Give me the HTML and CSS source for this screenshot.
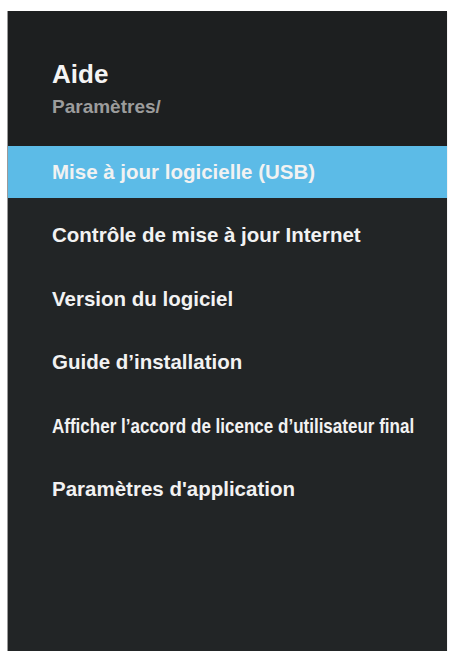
FILE: index.html
```html
<!DOCTYPE html>
<html>
<head>
    <link rel="stylesheet" href="styles.css">
</head>
<body>
    <div class="menu-panel">
        <!-- Header -->
        <div class="menu-header">
            <h1 class="menu-title">Aide</h1>
            <div class="menu-path">Paramètres/</div>
        </div>

        <!-- Items -->
        <ul class="menu-list">
            <li class="menu-item active">Mise à jour logicielle (USB)</li>
            <li class="menu-item">Contrôle de mise à jour Internet</li>
            <li class="menu-item">Version du logiciel</li>
            <li class="menu-item">Guide d’installation</li>
            <li class="menu-item"><span class="narrow">Afficher l’accord de licence d’utilisateur final</span></li>
            <li class="menu-item">Paramètres d'application</li>
        </ul>
    </div>
</body>
</html>
```

FILE: styles.css
```css
body {
    margin: 0;
    background: #fff;
    font-family: "Liberation Sans", Arial, sans-serif;
}

.menu-panel {
    width: 439px;
    height: 640px;
    margin: 11px 0 0 8px;
    background: #222526;
    box-shadow: -1px 0 0 #9a9a9a, 0 1px 1px #bbb;
    overflow: hidden;
}

.menu-header {
    height: 135px;
    padding: 48px 0 0 44px;
    box-sizing: border-box;
    background: #1d1f20;
}

.menu-title {
    margin: 0;
    font-size: 26px;
    line-height: 30px;
    font-weight: bold;
    color: #f4f4f4;
}

.menu-path {
    margin-top: 7px;
    font-size: 19px;
    line-height: 22px;
    font-weight: bold;
    color: #9c9c9c;
}

.menu-list {
    list-style: none;
    margin: 0;
    padding: 0;
    display: flex;
    flex-direction: column;
    gap: 11.4px;
}

.menu-item {
    height: 52px;
    line-height: 52px;
    padding-left: 44px;
    font-size: 20.5px;
    font-weight: bold;
    color: #f2f2f2;
    white-space: nowrap;
}

.menu-item.active {
    background: #5cbbe7;
}

.narrow {
    display: inline-block;
    transform: scaleX(0.83);
    transform-origin: left center;
}
```
